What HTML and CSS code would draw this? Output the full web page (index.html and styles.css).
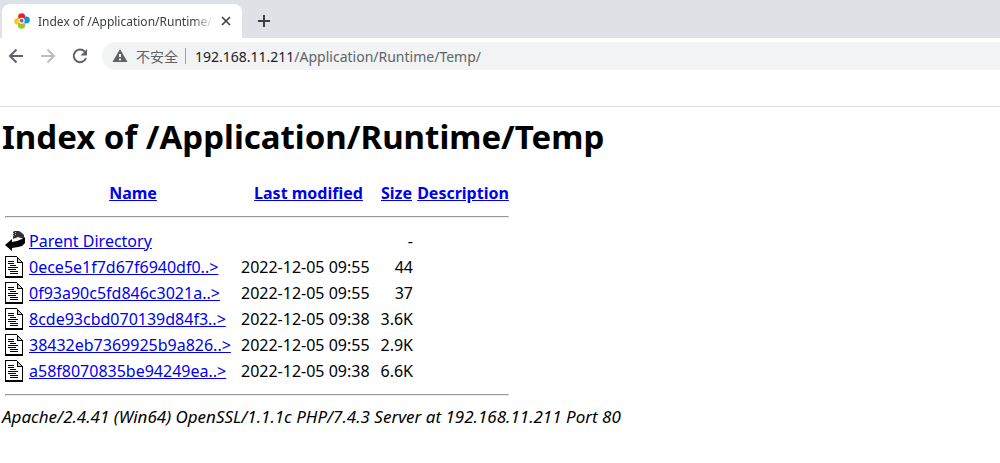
FILE: index.html
```html
<!DOCTYPE html>
<html lang="en">
<head>
<meta charset="utf-8">
<title>Index of /Application/Runtime/Temp</title>
<link rel="stylesheet" href="styles.css">
</head>
<body>
<svg class="defs" width="0" height="0" aria-hidden="true">
  <symbol id="doc" viewBox="0 0 20 22">
    <path d="M0 0h12v1h1v1h1v1h1v1h1v1h1v1h1v16H0z" fill="#000"/>
    <path d="M1 1h11v6h5v13H1z" fill="#fff"/>
    <path d="M13 3h1v1h1v1h1v1h-3z" fill="#ccc"/>
    <path d="M3 5.500h6M3 7.500h6M5 9.500h6M3 11.500h10M3 13.500h8M5 15.500h8M5 17.500h8" stroke="#000"/>
  </symbol>
</svg>
<header class="browser">
  <div class="tabs">
    <div class="tab">
      <svg class="favicon" viewBox="0 0 16 16" aria-hidden="true">
        <ellipse cx="3.800" cy="8.300" rx="3.600" ry="3.200" fill="#fbc91b"/>
        <ellipse cx="12.200" cy="7" rx="3.600" ry="3.400" fill="#1296db"/>
        <ellipse cx="7.500" cy="12.200" rx="3.600" ry="3.500" fill="#9fc91c"/>
        <path d="M4 3.500Q4.500 0 8 .3Q11.500.5 11 4L10 6H5z" fill="#e9232b"/>
        <circle cx="7.700" cy="7.700" r="3" fill="#fff"/>
        <circle cx="7.700" cy="7.700" r="1.900" fill="#c2439a"/>
      </svg>
      <span class="tab-title">Index of /Application/Runtime/Temp</span>
      <button class="icon-button close" aria-label="Close tab"><svg width="10" height="10" viewBox="0 0 10 10"><path d="M1 1l8 8M9 1l-8 8" stroke="#3c4043" stroke-width="1.600"/></svg></button>
    </div>
    <button class="icon-button new-tab" aria-label="New tab"><svg width="12" height="12" viewBox="0 0 12 12"><path d="M6 0v12M0 6h12" stroke="#3c4043" stroke-width="2"/></svg></button>
  </div>
  <div class="toolbar">
    <button class="icon-button" aria-label="Back"><svg width="16" height="16" viewBox="0 0 16 16"><path d="M15 8H2.500M8.500 1.500L2 8l6.500 6.500" fill="none" stroke="#5f6368" stroke-width="2"/></svg></button>
    <button class="icon-button" aria-label="Forward" disabled><svg width="16" height="16" viewBox="0 0 16 16"><path d="M1 8h12.500M7.500 1.500L14 8l-6.500 6.500" fill="none" stroke="#bbbdbf" stroke-width="2"/></svg></button>
    <button class="icon-button" aria-label="Reload"><svg width="16" height="16" viewBox="0 0 16 16"><path d="M12.800 3.700A6.300 6.300 0 1 0 14 10" fill="none" stroke="#5f6368" stroke-width="2"/><path d="M15 1v6.500H8.500z" fill="#5f6368"/></svg></button>
    <div class="omnibox">
      <svg class="warning" width="16" height="14" viewBox="0 0 16 14" aria-hidden="true"><path d="M8 0l7.500 13H.5z" fill="#5f6368"/><path d="M7 5h2v3H7zM7 9.500h2v2H7z" fill="#f1f3f4"/></svg>
      <span class="security">不安全</span>
      <span class="address"><span class="host">192.168.11.211</span>/Application/Runtime/Temp/</span>
    </div>
  </div>
</header>
<main class="page">
  <h1 class="heading">Index of /Application/Runtime/Temp</h1>
  <table class="listing">
    <colgroup><col class="c-icon"><col class="c-name"><col class="c-date"><col class="c-size"><col class="c-desc"></colgroup>
    <tr><th></th><th><a href="#">Name</a></th><th><a href="#">Last modified</a></th><th><a href="#">Size</a></th><th><a href="#">Description</a></th></tr>
    <tr><td colspan="5" class="line"><hr></td></tr>
    <tr>
      <td><svg class="file-icon" viewBox="0 0 20 22" role="img" aria-label="Parent"><path d="M8 1h6l3 2 2 2v4l-3-1-3-1-5 2z" fill="#333"/><path d="M8 1h1v1H8zM10 2h1v1h-1zM8 3h1v1H8zM10 4h1v1h-1zM8 5h1v1H8z" fill="#bbb"/><path d="M20 7v6l-3 3-4 1-6 1v3l-7-6 7-6v3l5-1 5-2z" fill="#000"/><path d="M9 9.500l4-1h4" fill="none" stroke="#fff"/></svg></td>
      <td><a href="#">Parent Directory</a></td><td></td><td class="size">-</td><td></td>
    </tr>
    <tr><td><svg class="file-icon" role="img" aria-label="Text file"><use href="#doc"/></svg></td><td><a href="#">0ece5e1f7d67f6940df0..&gt;</a></td><td>2022-12-05 09:55</td><td class="size">44</td><td></td></tr>
    <tr><td><svg class="file-icon" role="img" aria-label="Text file"><use href="#doc"/></svg></td><td><a href="#">0f93a90c5fd846c3021a..&gt;</a></td><td>2022-12-05 09:55</td><td class="size">37</td><td></td></tr>
    <tr><td><svg class="file-icon" role="img" aria-label="Text file"><use href="#doc"/></svg></td><td><a href="#">8cde93cbd070139d84f3..&gt;</a></td><td>2022-12-05 09:38</td><td class="size">3.6K</td><td></td></tr>
    <tr><td><svg class="file-icon" role="img" aria-label="Text file"><use href="#doc"/></svg></td><td><a href="#">38432eb7369925b9a826..&gt;</a></td><td>2022-12-05 09:55</td><td class="size">2.9K</td><td></td></tr>
    <tr><td><svg class="file-icon" role="img" aria-label="Text file"><use href="#doc"/></svg></td><td><a href="#">a58f8070835be94249ea..&gt;</a></td><td>2022-12-05 09:38</td><td class="size">6.6K</td><td></td></tr>
    <tr><td colspan="5" class="line"><hr></td></tr>
  </table>
  <address class="server">Apache/2.4.41 (Win64) OpenSSL/1.1.1c PHP/7.4.3 Server at 192.168.11.211 Port 80</address>
</main>
</body>
</html>
```
FILE: styles.css
```css
body {
  margin: 0;
  background: #fff;
  color: #000;
  font-family: "Noto Sans", "Open Sans", "Noto Sans CJK SC", sans-serif;
  font-size: 16px;
}
.defs { position: absolute; }
.browser { border-bottom: 1px solid #dadce0; padding-bottom: 36px; }
.tabs {
  display: flex;
  align-items: flex-end;
  height: 38px;
  padding-left: 2px;
  background: #dee1e6;
}
.tab {
  display: flex;
  align-items: center;
  box-sizing: border-box;
  width: 240px;
  height: 34px;
  padding: 0 8px 0 12px;
  border-radius: 8px 8px 0 0;
  background: #fff;
}
.favicon { flex: none; width: 16px; height: 16px; margin-right: 8px; }
.tab-title {
  flex: 1;
  overflow: hidden;
  white-space: nowrap;
  font-size: 12px;
  color: #3c4043;
  mask-image: linear-gradient(to right, #000 88%, transparent);
}
.icon-button {
  display: flex;
  align-items: center;
  justify-content: center;
  width: 16px;
  height: 16px;
  padding: 0;
  border: 0;
  background: none;
}
.close { margin-left: 4px; }
.new-tab { margin: 0 0 9px 14px; }
.toolbar { display: flex; align-items: center; gap: 16px; padding: 4px 0 0 8px; }
.omnibox {
  display: flex;
  align-items: center;
  flex: 1;
  height: 28px;
  margin-left: -2px;
  padding-left: 10px;
  border-radius: 14px 0 0 14px;
  background: #f1f3f4;
  font-size: 14px;
  color: #5f6368;
}
.security {
  margin: 0 9px 0 8px;
  padding-right: 7px;
  border-right: 1px solid #9aa0a6;
  line-height: 16px;
  font-family: "Noto Sans CJK SC", sans-serif;
}
.host { color: #202124; }
.page { padding: 8px 2px; }
.heading { margin: 0 0 20px; font-size: 33px; line-height: 44px; }
.listing { table-layout: fixed; width: 510px; border-spacing: 2px; line-height: 22px; white-space: nowrap; }
.listing th, .listing td { padding: 1px; }
.c-icon { width: 22px; }
.c-name { width: 210px; }
.c-date { width: 137px; }
.c-size { width: 35px; }
a { color: #00e; }
.size { text-align: right; }
.line hr { margin: 8px 0; }
.file-icon { display: block; width: 20px; height: 22px; }
.server { font-size: 17px; line-height: 20px; }
```
